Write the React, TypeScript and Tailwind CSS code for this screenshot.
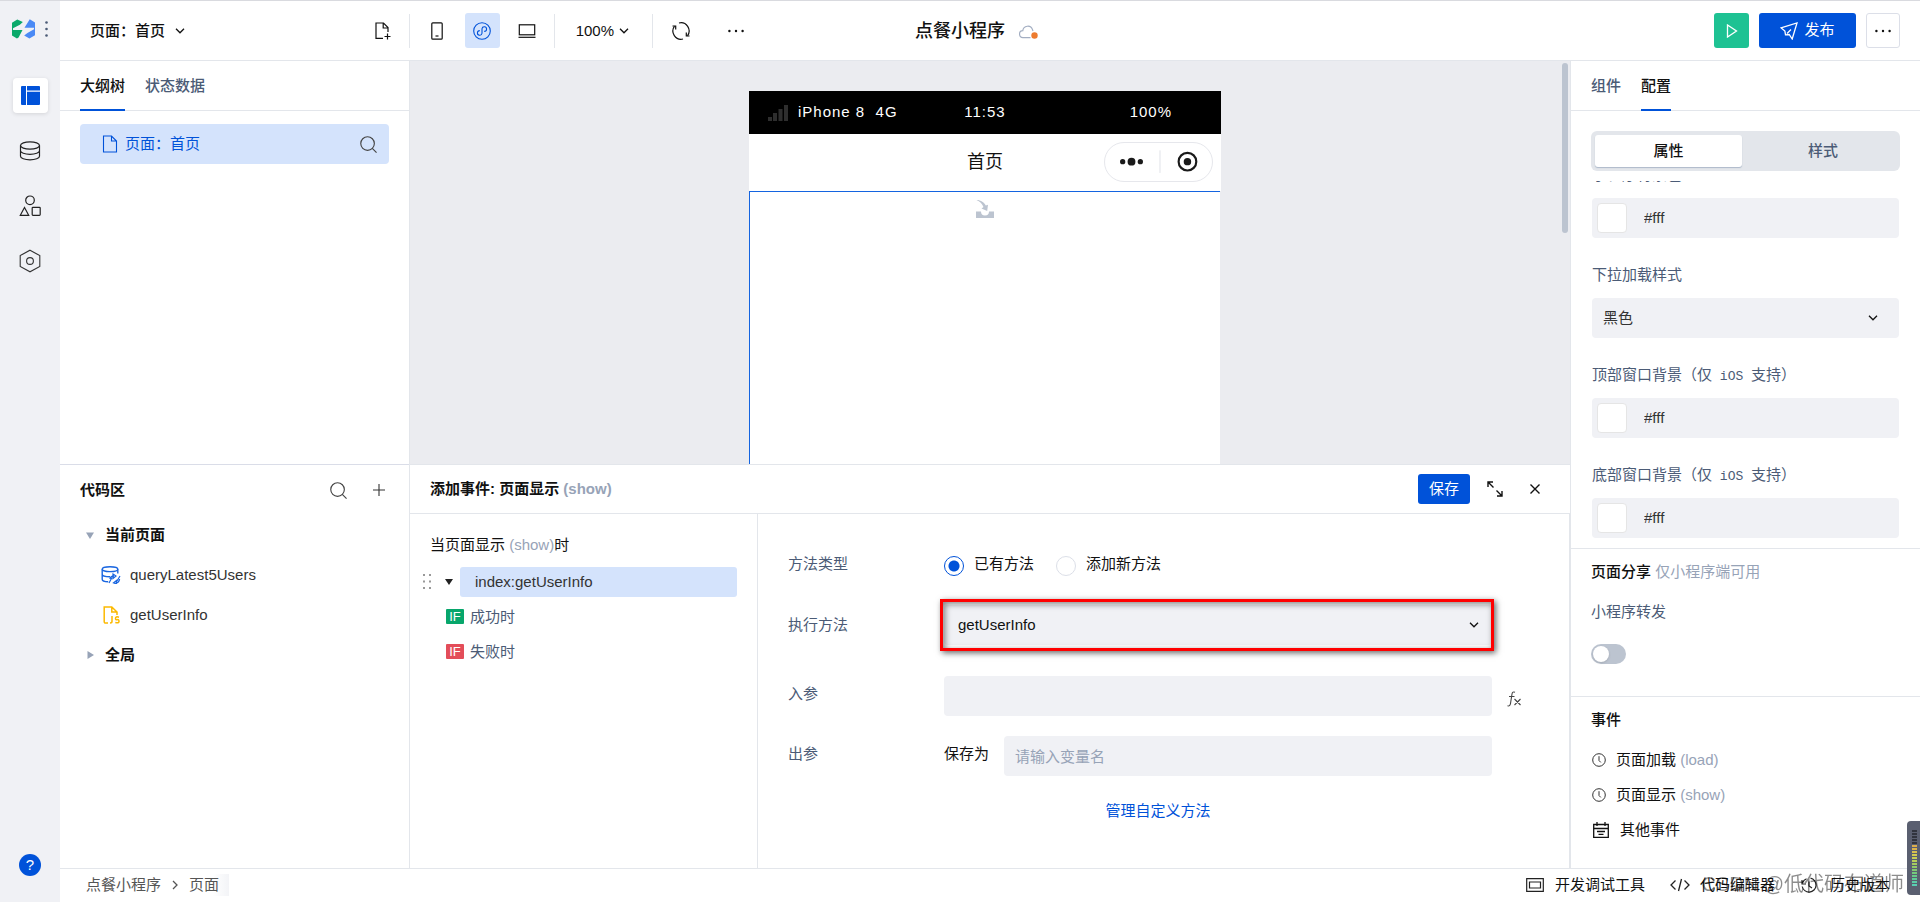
import { useState, type ReactNode } from "react";

interface IconProps {
  className?: string;
}

function ChevronDown({ className = "w-[10px] h-[6px]" }: IconProps) {
  return (
    <svg viewBox="0 0 10 6" className={className} fill="none" stroke="currentColor" strokeWidth="1.3">
      <path d="M1 .8 5 4.8 9 .8" />
    </svg>
  );
}

function SearchIcon({ className }: IconProps) {
  return (
    <svg viewBox="0 0 18 18" className={className} fill="none" stroke="currentColor" strokeWidth="1.2">
      <circle cx="8" cy="8" r="7.2" />
      <path d="m13 13 4.500 4.500" />
    </svg>
  );
}

function Dots() {
  return (
    <svg viewBox="0 0 16 4" className="w-4 h-1" fill="currentColor">
      <circle cx="1.4" cy="2" r="1.2" />
      <circle cx="8" cy="2" r="1.2" />
      <circle cx="14.6" cy="2" r="1.2" />
    </svg>
  );
}

function ClockIcon() {
  return (
    <svg viewBox="0 0 14 14" className="w-[14px] h-[14px]" fill="none" stroke="#333" strokeWidth="1">
      <circle cx="7" cy="7" r="6.3" />
      <path d="M7 3.2V7.5L8.8 9.4" />
    </svg>
  );
}

function Logo() {
  return (
    <svg viewBox="0 0 70 60" className="w-[23px] h-5">
      <path d="M0 11 16 1 33 9 24 17 3 28 3 33 32 33 20 56 15 59 0 50z" fill="#0aa96a" />
      <path d="M54 0 70 10v39L53 59 37 50l10-8 20-11v-5H38z" fill="#4b8af5" />
    </svg>
  );
}

function Divider() {
  return <span className="w-px h-[34px] shrink-0 bg-[#e3e6eb]" />;
}

function Header() {
  return (
    <header className="flex h-[61px] shrink-0 border-t border-t-[#d9dadf] bg-white">
      <div className="flex w-[60px] shrink-0 items-center gap-[10px] bg-[#f0f1f5] pl-3 pb-[5px]">
        <Logo />
        <svg viewBox="0 0 3 16" className="w-[3px] h-4" fill="#4b5b76">
          <circle cx="1.5" cy="1.5" r="1.3" />
          <circle cx="1.5" cy="8" r="1.3" />
          <circle cx="1.5" cy="14.5" r="1.3" />
        </svg>
      </div>
      <div className="flex flex-1 items-center border-b border-[#e3e6eb]">
        <div className="flex w-[684px] shrink-0 items-center">
          <button className="ml-[30px] flex items-center gap-[10px] text-[15px] font-medium leading-5">
            页面：首页
            <ChevronDown />
          </button>
          <button aria-label="新建页面" className="ml-auto mr-[18px]">
            <svg viewBox="0 0 16 18" className="w-4 h-[18px]" fill="none" stroke="currentColor" strokeWidth="1.2">
              <path d="M8 16.4H1V1h7.5L13 5.5V10M8.2 1v5H13" />
              <path d="M12.5 11.5v6M9.5 14.5h6" />
            </svg>
          </button>
          <Divider />
          <div className="flex items-center gap-[10px] pl-[10px] pr-[9px]">
            <button aria-label="手机" className="flex size-[35px] items-center justify-center">
              <svg viewBox="0 0 12 18" className="w-3 h-[18px]" fill="none" stroke="currentColor" strokeWidth="1.2">
                <rect x=".8" y=".8" width="10.4" height="16.4" rx="1" />
                <path d="M4.5 14h3" />
              </svg>
            </button>
            <button aria-label="小程序" className="flex size-[35px] items-center justify-center rounded-[3px] bg-[#d4e3fc] text-[#0052d9]">
              <svg viewBox="0 0 18 18" className="size-[18px]" fill="none" stroke="currentColor" strokeWidth="1.1">
                <circle cx="9" cy="9" r="8.3" />
                <path d="M6.800 8.600a2.300 2.300 0 1 0 2.200 2.600V6.800a2.300 2.300 0 1 1 2.200 2.600" />
              </svg>
            </button>
            <button aria-label="电脑" className="flex size-[35px] items-center justify-center">
              <svg viewBox="0 0 18 14" className="w-[18px] h-[14px]" fill="none" stroke="currentColor" strokeWidth="1.2">
                <rect x="1.3" y=".8" width="15.4" height="10" />
                <path d="M.5 13.3h17" />
              </svg>
            </button>
          </div>
          <Divider />
          <button className="flex items-center gap-[5px] pl-[21px] pr-[23px] text-[15px] leading-5">
            100%
            <ChevronDown />
          </button>
          <Divider />
          <button aria-label="刷新" className="ml-[19px]">
            <svg viewBox="0 0 18 18" className="size-[18px]" fill="none" stroke="currentColor" strokeWidth="1.200">
              <path d="M7 1A8.200 8.200 0 0 1 15.500 13.800M11 17A8.200 8.200 0 0 1 2.500 4.200" />
              <path d="M.5 4h3.200v3.400M17.500 14h-3.200v-3.400" />
            </svg>
          </button>
          <button aria-label="更多" className="ml-[38px]">
            <Dots />
          </button>
        </div>
        <div className="relative ml-[171px] shrink-0">
          <h1 className="text-[18px] font-medium leading-6">点餐小程序</h1>
          <svg viewBox="0 0 20 14" className="absolute left-full top-[6px] ml-[14px] w-5 h-[14px]" fill="none">
            <path d="M11.5 12.600H4.300a3.500 3.500 0 0 1-.5-7A5 5 0 0 1 13.500 4.600L14 6" stroke="#a3aec2" strokeWidth="1.2" />
            <circle cx="15.5" cy="10.500" r="3.200" fill="#ed7b2f" />
          </svg>
        </div>
        <div className="ml-auto flex items-center gap-[10px] pr-5">
          <button aria-label="预览" className="flex size-[35px] items-center justify-center rounded-[3px] bg-[#1ec293] text-white">
            <svg viewBox="0 0 12 14" className="w-3 h-[14px]" fill="none" stroke="currentColor" strokeWidth="1.3">
              <path d="M1.5 1v12L10.500 7z" />
            </svg>
          </button>
          <button className="flex h-[35px] w-[97px] items-center justify-center gap-[6px] rounded-[3px] bg-[#0052d9] text-[15px] text-white">
            <svg viewBox="0 0 18 18" className="size-[18px]" fill="none" stroke="currentColor" strokeWidth="1.3">
              <path d="M1 5.800 17 1l-4.800 16-3-4.500-3.700.3-.6-3.700zM7 11.500l4-4" />
            </svg>
            发布
          </button>
          <button aria-label="更多操作" className="flex h-[35px] w-[34px] items-center justify-center rounded-[3px] border border-[#dcdfe8]">
            <Dots />
          </button>
        </div>
      </div>
    </header>
  );
}

function SideNav() {
  return (
    <nav className="flex w-[60px] shrink-0 flex-col items-center bg-[#f0f1f5] pt-[17px] pb-[26px]">
      <button aria-label="页面设计" className="flex size-[35px] items-center justify-center rounded bg-white shadow-[0_1px_4px_rgba(0,0,0,0.12)]">
        <svg viewBox="0 0 19 19" className="size-[19px]" fill="#0052d9">
          <path d="M1 0h4v19H1a1 1 0 0 1-1-1V1a1 1 0 0 1 1-1zM6 0h12a1 1 0 0 1 1 1v3.500H6zM6 5.800h13V18a1 1 0 0 1-1 1H6z" />
        </svg>
      </button>
      <button aria-label="数据源" className="mt-7">
        <svg viewBox="0 0 22 20" className="w-[22px] h-5" fill="none" stroke="#222" strokeWidth="1.200">
          <ellipse cx="11" cy="4.500" rx="9.500" ry="3.700" />
          <path d="M1.500 4.500v5.300c0 2 4.200 3.500 9.500 3.500s9.500-1.500 9.500-3.500V4.500M1.500 9.800v5.400c0 2 4.200 3.700 9.500 3.700s9.500-1.700 9.500-3.700V9.800" />
        </svg>
      </button>
      <button aria-label="组件库" className="mt-[34px]">
        <svg viewBox="0 0 22 22" className="size-[22px]" fill="none" stroke="#222" strokeWidth="1.2">
          <circle cx="11" cy="5.300" r="4.300" />
          <path d="M5.500 12.500 1.300 20.300h8.400z" />
          <rect x="13.200" y="12.300" width="8" height="8" rx=".8" />
        </svg>
      </button>
      <button aria-label="设置" className="mt-8">
        <svg viewBox="0 0 22 24" className="w-[22px] h-6" fill="none" stroke="#333" strokeWidth="1.1">
          <path d="m11 1.200 9.800 5.400v10.800L11 22.800 1.200 17.400V6.600z" />
          <circle cx="11" cy="12" r="3.400" />
        </svg>
      </button>
      <button aria-label="帮助" className="mt-auto flex size-[22px] items-center justify-center rounded-full bg-[#0052d9] text-[15px] leading-5 text-white">
        ?
      </button>
    </nav>
  );
}

function OutlinePanel() {
  return (
    <section className="flex flex-1 flex-col">
      <div role="tablist" className="flex h-[50px] gap-5 border-b border-[#e3e6eb] px-5 text-[15px] leading-5">
        <button role="tab" aria-selected className="-mb-px h-[50px] border-b-2 border-[#0052d9] pt-[2px] font-medium">
          大纲树
        </button>
        <button role="tab" aria-selected={false} className="font-medium text-[#4b5b76]">
          状态数据
        </button>
      </div>
      <div className="mx-5 mt-[13px] flex h-10 items-center rounded bg-[#d4e3fc] pl-[22px] pr-3 text-[15px] text-[#0052d9]">
        <svg viewBox="0 0 16 18" className="w-4 h-[18px]" fill="none" stroke="currentColor" strokeWidth="1.1">
          <path d="M1.500 1h8L14.500 6v11h-13zM9.500 1v5h5" />
        </svg>
        <span className="ml-[7px]">页面：首页</span>
        <button aria-label="搜索组件" className="ml-auto text-[#444]">
          <SearchIcon className="size-[17px]" />
        </button>
      </div>
    </section>
  );
}

function CodePanel() {
  return (
    <section className="flex-1 border-t border-[#dadde8]">
      <div className="flex h-[50px] items-center pl-5 pr-6">
        <h2 className="text-[15px] font-bold">代码区</h2>
        <button aria-label="搜索" className="ml-auto text-[#444]">
          <SearchIcon className="size-[17px]" />
        </button>
        <button aria-label="新增" className="ml-[26px] text-[#333]">
          <svg viewBox="0 0 12 12" className="size-3" stroke="currentColor" strokeWidth="1.1">
            <path d="M6 0v12M0 6h12" />
          </svg>
        </button>
      </div>
      <ul className="text-[15px] leading-10">
        <li className="flex items-center pl-[26px] font-bold">
          <svg viewBox="0 0 8 7" className="w-2 h-[7px]" fill="#97a3b7"><path d="M0 .5h8L4 7z" /></svg>
          <span className="ml-[11px]">当前页面</span>
        </li>
        <li className="flex items-center pl-[41px] text-[#333]">
          <svg viewBox="0 0 20 18" className="w-5 h-[18px]" fill="none" stroke="#1a66e0" strokeWidth="1.400">
            <ellipse cx="9" cy="3.200" rx="7.800" ry="2.400" />
            <path d="M1.200 3.200v5c0 1.400 3 2.500 7.800 2.500M16.800 3.200v4.300M1.200 8.200v5c0 1.400 2 2.500 6 2.600" />
            <path d="M9 13q.5-3 4-3M18.500 13q-.5 4-4 4" />
            <path d="m12 8 3 2-3 2.500zM15.500 14.500l-3 2.300 3 1.200zM8 17l3-5.500M16 15l3-5" strokeWidth="1.200" />
          </svg>
          <span className="ml-[9px]">queryLatest5Users</span>
        </li>
        <li className="flex items-center pl-[43px] text-[#333]">
          <svg viewBox="0 0 17 18" className="w-[17px] h-[18px]" fill="none" stroke="#fcb900" strokeWidth="1.500">
            <path d="M5 17H2.500A1.200 1.200 0 0 1 1.200 15.800V1h7.600L14 6v3M8.800 1v5H14" />
            <path d="M9 10v5.500q0 1.500-2 1.500M16 11.200q-3.500-1-3.500 1t1.800 1.500 1.700 1.800q0 2-3.700 1" />
          </svg>
          <span className="ml-[10px]">getUserInfo</span>
        </li>
        <li className="flex items-center pl-[27px] font-bold">
          <svg viewBox="0 0 7 8" className="w-[7px] h-2" fill="#97a3b7"><path d="M.5 0v8L7 4z" /></svg>
          <span className="ml-[11px]">全局</span>
        </li>
      </ul>
    </section>
  );
}

function Canvas() {
  return (
    <section className="relative flex min-h-0 flex-1 basis-0 justify-center overflow-hidden bg-[#ebecf0]">
      <div className="mr-[10px] mt-[30px] flex w-[472px] flex-col">
        <div className="grid h-[43px] shrink-0 grid-cols-3 items-center bg-black px-[19px] text-[15px] tracking-[1px] text-white">
          <div className="flex items-center gap-[10px] whitespace-pre">
            <svg viewBox="0 0 20 16" className="w-5 h-4" fill="#2e2e2e">
              <path d="M0 12h4v4H0zM5 8h4v8H5zM10.500 4h4v12h-4zM16 0h4v16h-4z" />
            </svg>
            {"iPhone 8  4G"}
          </div>
          <span className="text-center">11:53</span>
          <span className="pr-[30px] text-right">100%</span>
        </div>
        <div className="relative flex h-[57px] shrink-0 items-center justify-center bg-white text-[18px]">
          首页
          <div className="absolute right-2 top-2 flex h-10 w-[109px] items-center rounded-full border border-[#e6e7ec]">
            <svg viewBox="0 0 109 40" className="w-full" fill="#1a1a1a">
              <circle cx="18" cy="20" r="2.700" />
              <circle cx="27" cy="20" r="4" />
              <circle cx="36" cy="20" r="2.700" />
              <path d="M56 8.500v23" stroke="#e0e2e8" />
              <circle cx="84" cy="20" r="9" fill="none" stroke="#1a1a1a" strokeWidth="2.200" />
              <circle cx="84" cy="20" r="3.800" />
            </svg>
          </div>
        </div>
        <div className="mr-px flex flex-1 justify-center border-l border-t border-[#1464e0] bg-white pt-2">
          <svg viewBox="0 0 18 18" className="size-[18px]" fill="#bcc4d0">
            <path d="M0 11.500h5a4 4 0 0 0 8 0h5V18H0z" />
            <path d="M.5 0C5 0 8.500 2.500 9.800 5.500l2.200-.8-.8 6.300L5.500 8.600l2-1.500C6 3.500 4 1.500.5 0z" />
          </svg>
        </div>
      </div>
      <div className="absolute right-[2px] top-[2px] h-[170px] w-[6px] rounded-full bg-[#bcc4d0]" />
    </section>
  );
}

function IfBadge({ color, children }: { color: string; children: ReactNode }) {
  return (
    <div className="flex h-[35px] items-center gap-[6px] pl-9 text-[15px] text-[#4b5b76]">
      <span className={`flex h-[15px] w-[18px] items-center justify-center rounded-[1px] text-[13px] leading-none text-white ${color}`}>
        IF
      </span>
      {children}
    </div>
  );
}

function EventPanel() {
  const [mode, setMode] = useState("exist");
  return (
    <section className="flex flex-1 basis-0 flex-col border-t border-[#e3e6eb] bg-white text-[15px] leading-5">
      <div className="flex h-[49px] shrink-0 items-center border-b border-[#e3e6eb] pl-5 pr-[30px]">
        <h2 className="font-bold">
          添加事件: 页面显示 <span className="text-[#97a3b7]">(show)</span>
        </h2>
        <button className="ml-auto h-[30px] w-[52px] rounded-[3px] bg-[#0052d9] text-white">保存</button>
        <button aria-label="放大" className="ml-[17px]">
          <svg viewBox="0 0 16 16" className="size-4" fill="none" stroke="currentColor" strokeWidth="1.400">
            <path d="M1 6V1h5M1 1l5.500 5.500M15 10v5h-5M15 15 9.500 9.500" />
          </svg>
        </button>
        <button aria-label="关闭" className="ml-[27px]">
          <svg viewBox="0 0 10 10" className="size-[10px]" stroke="currentColor" strokeWidth="1.400">
            <path d="m.5.5 9 9M9.500.5l-9 9" />
          </svg>
        </button>
      </div>
      <div className="flex flex-1 border-r border-[#e3e6eb]">
        <div className="w-[348px] shrink-0 border-r border-[#e3e6eb] pt-[21px]">
          <p className="pl-5">
            当页面显示 <span className="text-[#97a3b7]">(show)</span>时
          </p>
          <div className="mt-3 flex items-center pl-[13px] pr-5">
            <svg viewBox="0 0 9 16" className="w-[9px] h-4" fill="#999">
              <path d="M0 0h2v2H0zM6 0h2v2H6zM0 6.500h2v2H0zM6 6.500h2v2H6zM0 13h2v2H0zM6 13h2v2H6z" />
            </svg>
            <svg viewBox="0 0 8 6" className="ml-[13px] w-2 h-[6px]" fill="#222"><path d="M0 0h8L4 6z" /></svg>
            <button className="ml-[7px] h-[30px] flex-1 rounded-[3px] bg-[#d4e3fc] pl-[15px] text-left text-[#333]">
              index:getUserInfo
            </button>
          </div>
          <div className="mt-[2px]">
            <IfBadge color="bg-[#07a66b]">成功时</IfBadge>
            <IfBadge color="bg-[#e34d59]">失败时</IfBadge>
          </div>
        </div>
        <form className="flex-1 pl-[30px] pr-[77px] pt-10">
          <div className="flex">
            <span className="w-[156px] shrink-0 text-[#4b5b76]">方法类型</span>
            {[
              ["exist", "已有方法"],
              ["new", "添加新方法"],
            ].map(([value, label]) => (
              <label key={value} className="mr-[22px] flex gap-[10px]">
                <input
                  type="radio"
                  name="mode"
                  value={value}
                  checked={mode === value}
                  onChange={() => setMode(value)}
                  className="mt-[2px] size-5 appearance-none rounded-full border border-[#dcdfe8] bg-white checked:border-[#0052d9] checked:bg-[radial-gradient(circle,#0052d9_5px,transparent_6px)]"
                />
                {label}
              </label>
            ))}
          </div>
          <div className="mt-[29px] flex">
            <label htmlFor="method" className="mt-[10px] w-[156px] shrink-0 text-[#4b5b76]">执行方法</label>
            <div className="relative flex flex-1 items-center">
              <select id="method" className="h-10 w-full appearance-none rounded bg-[#f0f1f5] px-[14px]">
                <option>getUserInfo</option>
              </select>
              <ChevronDown className="pointer-events-none absolute right-[13px] w-[10px] h-[6px]" />
              {/* highlight frame drawn over the select */}
              <div className="pointer-events-none absolute -inset-y-[6px] -left-1 -right-[2px] border-3 border-[#f00] shadow-[2px_2px_6px_rgba(0,0,0,0.6),inset_2px_2px_6px_rgba(0,0,0,0.5)]" />
            </div>
          </div>
          <div className="mt-[31px] flex">
            <label htmlFor="input-param" className="mt-2 w-[156px] shrink-0 text-[#4b5b76]">入参</label>
            <div className="relative flex-1">
              <input id="input-param" className="block h-10 w-full rounded bg-[#f0f1f5] px-3" />
              <button type="button" aria-label="表达式" className="absolute left-full top-[15px] ml-[15px]">
                <svg viewBox="0 0 15 16" className="w-[15px] h-4" fill="none" stroke="#444" strokeWidth="1.100">
                  <path d="M8 1.200Q5.500.2 5 3L3.500 12.500Q3 15.500.5 14.800M2 5.500h5.500M7.500 8l6 6M13.500 8l-6 6" />
                </svg>
              </button>
            </div>
          </div>
          <div className="mt-5 flex">
            <span className="mt-2 w-[156px] shrink-0 text-[#4b5b76]">出参</span>
            <label htmlFor="output-param" className="mt-2 w-[60px] shrink-0">保存为</label>
            <input id="output-param" placeholder="请输入变量名" className="h-10 min-w-0 flex-1 rounded bg-[#f0f1f5] px-[11px] placeholder:text-[#97a3b7]" />
          </div>
          <div className="mt-[25px] pl-[36px] text-center">
            <a href="#methods" className="text-[#0052d9]">管理自定义方法</a>
          </div>
        </form>
      </div>
    </section>
  );
}

function ColorField({ id, label }: { id: string; label: ReactNode }) {
  return (
    <div className="mb-[27px]">
      <label htmlFor={id} className="block h-5 text-[#4b5b76]">{label}</label>
      <div className="mt-[13px] flex h-10 items-center rounded bg-[#f0f1f5] pl-[5px]">
        <span className="size-[30px] shrink-0 rounded border border-[#e5e5e5] bg-white" />
        <input id={id} defaultValue="#fff" className="ml-[17px] min-w-0 flex-1 text-[#333]" />
      </div>
    </div>
  );
}

function IosOnly({ children }: { children: ReactNode }) {
  return (
    <>
      {children}（仅<span className="font-['Liberation_Mono',monospace] text-[13px]"> iOS </span>支持）
    </>
  );
}

function ConfigPanel() {
  return (
    <aside className="flex w-[350px] shrink-0 flex-col border-l border-[#e3e6eb] bg-white text-[15px] leading-5">
      <div role="tablist" className="flex h-[50px] shrink-0 gap-5 border-b border-[#e3e6eb] px-5">
        <button role="tab" aria-selected={false} className="font-medium text-[#4b5b76]">组件</button>
        <button role="tab" aria-selected className="-mb-px h-[50px] border-b-2 border-[#0052d9] pt-[2px] font-medium">配置</button>
      </div>
      <div className="mx-5 mt-5 flex h-10 shrink-0 gap-1 rounded-md bg-[#e3e6eb] py-1 pl-1">
        <button className="h-8 w-[147px] rounded-[3px] bg-white font-medium shadow-[0_1px_1px_rgba(120,140,170,0.5)]">属性</button>
        <button className="h-8 flex-1 font-medium text-[#4b5b76]">样式</button>
      </div>
      <div className="mt-[10px] overflow-hidden px-[21px]">
        <div className="-mt-4">
          <ColorField id="window-bg" label="小程序背景色" />
          <div className="mb-[27px]">
            <label htmlFor="loading" className="block h-5 text-[#4b5b76]">下拉加载样式</label>
            <div className="relative mt-[13px] flex items-center">
              <select id="loading" className="h-10 w-full appearance-none rounded bg-[#f0f1f5] px-[11px] text-[#333]">
                <option>黑色</option>
              </select>
              <ChevronDown className="pointer-events-none absolute right-[21px] w-[10px] h-[6px]" />
            </div>
          </div>
          <ColorField id="top-bg" label={<IosOnly>顶部窗口背景</IosOnly>} />
          <ColorField id="bottom-bg" label={<IosOnly>底部窗口背景</IosOnly>} />
        </div>
      </div>
      <div className="-mt-[17px] h-[148px] shrink-0 border-t border-[#e3e6eb] px-5 pt-[13px]">
        <h3 className="font-medium">
          页面分享 <span className="font-normal text-[#97a3b7]">仅小程序端可用</span>
        </h3>
        <label htmlFor="share" className="mt-5 block text-[#4b5b76]">小程序转发</label>
        <input
          id="share"
          type="checkbox"
          role="switch"
          className="mt-[22px] block h-5 w-[35px] appearance-none rounded-full bg-[#bcc4d0] p-[2px] before:block before:size-4 before:rounded-full before:bg-white before:shadow before:content-[''] checked:bg-[#0052d9] checked:pl-[17px]"
        />
      </div>
      <div className="flex-1 border-t border-[#e3e6eb] px-5 pt-[13px]">
        <h3 className="font-medium">事件</h3>
        <ul className="mt-3 leading-[35px]">
          <li className="flex items-center gap-[10px] pl-px">
            <ClockIcon />
            <span>页面加载 <span className="text-[#97a3b7]">(load)</span></span>
          </li>
          <li className="flex items-center gap-[10px] pl-px">
            <ClockIcon />
            <span>页面显示 <span className="text-[#97a3b7]">(show)</span></span>
          </li>
          <li className="flex items-center gap-[11px] pl-[2px]">
            <svg viewBox="0 0 16 16" className="size-4" fill="none" stroke="#111" strokeWidth="1.300">
              <path d="M.7 2.500h14.600v12.800H.7zM.7 6.500h14.600M4 0v4M12 0v4M4 9.500h8M5.500 12.300h5" />
            </svg>
            其他事件
          </li>
        </ul>
      </div>
    </aside>
  );
}

function StatusBar() {
  return (
    <footer className="flex h-[34px] shrink-0 items-center border-t border-[#e3e6eb] bg-white pb-[2px] pl-[26px] pr-[30px] text-[15px] leading-5">
      <nav className="flex items-center text-[#555]">
        <a href="#app">点餐小程序</a>
        <svg viewBox="0 0 6 10" className="mx-[11px] w-[6px] h-[10px]" fill="none" stroke="currentColor" strokeWidth="1.300">
          <path d="m1 1 4 4-4 4" />
        </svg>
        <a href="#page" className="bg-linear-to-r from-white from-60% to-[#f3f4f7] py-px pr-[10px]">页面</a>
      </nav>
      <button className="ml-auto flex items-center gap-[11px]">
        <svg viewBox="0 0 18 14" className="w-[18px] h-[14px]" fill="none" stroke="#222" strokeWidth="1.200">
          <path d="M.7.7h16.600v12.600H.7zM3.500 4h11v6h-11z" />
        </svg>
        开发调试工具
      </button>
      <button className="ml-[25px] flex items-center gap-[10px]">
        <svg viewBox="0 0 20 14" className="w-5 h-[14px]" fill="none" stroke="#222" strokeWidth="1.300">
          <path d="M5.500 2.500 1 7l4.500 4.500M14.500 2.500 19 7l-4.500 4.500M11.500 1l-3 12" />
        </svg>
        代码编辑器
      </button>
      <button className="ml-[26px] flex items-center gap-[13px]">
        <svg viewBox="0 0 16 16" className="size-4" fill="none" stroke="#222" strokeWidth="1.200">
          <path d="M1 3v4h4M5.500 1.800A7 7 0 0 0 1.500 6M1.200 9.500A7 7 0 1 0 9.500 1.200M8 4.500V9l3 2" />
        </svg>
        历史版本
      </button>
    </footer>
  );
}

const meterColors = [
  "#31343e", "#31343e", "#31343e", "#31343e", "#31343e",
  "#dcae4c", "#dcb44c", "#d8c04e", "#d3cb50", "#c8cf54", "#b9cf58", "#a5cc60",
  "#93ca68", "#82c872", "#74c97c", "#67c988", "#5fcb98", "#5bcda6", "#58cfb2",
];

function LevelMeter() {
  return (
    <div className="fixed bottom-[7px] right-0 flex h-[74px] w-[13px] flex-col gap-px rounded-l bg-[#5a5f70] pl-[5px] pr-[3px] pt-[9px]">
      {meterColors.map((color, i) => (
        <span key={i} className="h-[2px] shrink-0" style={{ backgroundColor: color }} />
      ))}
    </div>
  );
}

export default function App() {
  return (
    <div lang="zh-CN" className="flex h-screen flex-col overflow-hidden bg-white font-['Liberation_Sans','Noto_Sans_CJK_SC',sans-serif] text-[#111]">
      <Header />
      <div className="flex min-h-0 flex-1">
        <SideNav />
        <div className="flex min-w-0 flex-1 flex-col">
          <div className="flex min-h-0 flex-1">
            <div className="flex w-[350px] shrink-0 flex-col border-r border-[#e3e6eb] bg-white">
              <OutlinePanel />
              <CodePanel />
            </div>
            <main className="flex min-w-0 flex-1 flex-col">
              <Canvas />
              <EventPanel />
            </main>
            <ConfigPanel />
          </div>
          <StatusBar />
        </div>
      </div>
      <div className="pointer-events-none fixed bottom-1 right-4 text-[20px] leading-7 text-black/45">CSDN @低代码布道师</div>
      <LevelMeter />
    </div>
  );
}
